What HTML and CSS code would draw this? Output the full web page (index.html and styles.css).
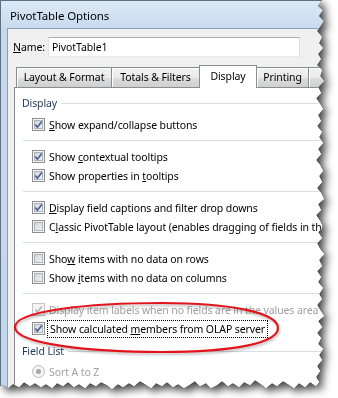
FILE: index.html
```html
<!DOCTYPE html>
<html lang="en">
<head>
    <meta charset="UTF-8">
    <title>PivotTable Options</title>
    <link rel="stylesheet" href="styles.css">
</head>
<body>
    <div class="sheet">
        <div class="shadow">
            <div class="window">
                <div class="titlebar">PivotTable Options</div>
                <div class="frame">
                    <div class="client">
                        <!-- Name -->
                        <div class="name-row">
                            <span class="name-label"><u>N</u>ame:</span>
                            <div class="textbox">PivotTable1</div>
                        </div>

                        <!-- Tabs -->
                        <div class="tabs">
                            <div class="tab tab-layout">Layout &amp; Format</div>
                            <div class="tab tab-totals">Totals &amp; Filters</div>
                            <div class="tab tab-display active">Display</div>
                            <div class="tab tab-printing">Printing</div>
                            <div class="tab tab-data">Data</div>
                        </div>

                        <div class="panel">
                            <div class="group-title"><span>Display</span></div>

                            <div class="row"><span class="check on"><svg viewBox="0 0 11 11"><path d="M2.3 5.4 L4.4 8.2 L8.8 2.4"/></svg></span><span><u>S</u>how expand/collapse buttons</span></div>
                            <div class="sep"></div>

                            <div class="row"><span class="check on"><svg viewBox="0 0 11 11"><path d="M2.3 5.4 L4.4 8.2 L8.8 2.4"/></svg></span><span>Show <u>c</u>ontextual tooltips</span></div>
                            <div class="row"><span class="check on"><svg viewBox="0 0 11 11"><path d="M2.3 5.4 L4.4 8.2 L8.8 2.4"/></svg></span><span>Show properties in <u>t</u>ooltips</span></div>
                            <div class="sep"></div>

                            <div class="row"><span class="check on"><svg viewBox="0 0 11 11"><path d="M2.3 5.4 L4.4 8.2 L8.8 2.4"/></svg></span><span><u>D</u>isplay field captions and filter drop downs</span></div>
                            <div class="row"><span class="check"></span><span>C<u>l</u>assic PivotTable layout (enables dragging of fields in the grid)</span></div>
                            <div class="sep"></div>

                            <div class="row"><span class="check"></span><span>Sho<u>w</u> items with no data on rows</span></div>
                            <div class="row"><span class="check"></span><span>Show <u>i</u>tems with no data on columns</span></div>
                            <div class="sep"></div>

                            <div class="row disabled"><span class="check on"><svg viewBox="0 0 11 11"><path d="M2.3 5.4 L4.4 8.2 L8.8 2.4"/></svg></span><span>Display item labels when no fields are in the values area</span></div>
                            <div class="row"><span class="check on"><svg viewBox="0 0 11 11"><path d="M2.3 5.4 L4.4 8.2 L8.8 2.4"/></svg></span><span class="focus">Show calculated <u>m</u>embers from OLAP server</span></div>

                            <div class="group-title field-list"><span>Field List</span></div>
                            <div class="row disabled"><span class="radio"><span class="dot"></span></span><span>Sort A to Z</span></div>
                        </div>
                    </div>
                </div>
            </div>
        </div>

        <!-- red marker ring -->
        <svg class="marker" width="338" height="398" viewBox="0 0 338 398">
            <path d="M15 327 C15 311 88 303 162 303 C232 303 278 313 278 328 C278 343 234 352 162 352 C90 352 15 344 15 327 Z"/>
        </svg>
    </div>
</body>
</html>
```

FILE: styles.css
```css
* {
    margin: 0;
    padding: 0;
    box-sizing: border-box;
}

body {
    background-color: #ffffff;
    font-family: "Noto Sans", "Open Sans", sans-serif;
    font-size: 10.5px;
    letter-spacing: -0.1px;
    color: #000000;
}

u {
    text-underline-offset: 1px;
}

.sheet {
    position: relative;
    width: 338px;
    height: 398px;
    overflow: hidden;
}

.shadow {
    filter: drop-shadow(0 0 0.6px rgba(0, 0, 0, 0.9)) drop-shadow(4px 4px 4px rgba(0, 0, 0, 0.75));
}

.window {
    width: 328px;
    height: 396px;
    display: flex;
    flex-direction: column;
    background: linear-gradient(#dce8f5, #c7d9ee 30px, #c2d6ec);
    border-top: 1px solid #5f6f84;
    border-left: 1px solid #5f6f84;
    clip-path: path('M0 0 H322 L318 6 L323 10 L319 16 L324 21 L320 27 L317 31 L322 37 L319 43 L323 48 L318 54 L321 59 L317 65 L322 70 L320 76 L324 81 L318 87 L321 93 L316 98 L320 104 L323 109 L318 115 L321 121 L317 126 L322 132 L319 137 L323 143 L318 149 L321 154 L316 160 L320 165 L323 171 L319 176 L322 182 L317 188 L321 193 L324 199 L318 204 L321 210 L316 215 L320 221 L323 227 L318 232 L322 238 L317 243 L320 249 L324 254 L319 260 L322 266 L317 271 L321 277 L318 282 L323 288 L319 294 L322 299 L317 305 L320 310 L324 316 L318 321 L322 327 L317 333 L321 338 L318 344 L323 349 L319 355 L322 360 L317 366 L320 371 L316 377 L319 382 L316 386 L310 382 L305 387 L299 383 L294 388 L288 384 L283 381 L277 386 L272 383 L266 388 L261 384 L255 380 L250 385 L244 382 L239 387 L233 383 L228 386 L222 381 L217 385 L211 388 L206 383 L200 386 L195 381 L189 385 L184 388 L178 384 L173 387 L167 382 L162 386 L156 383 L151 388 L145 384 L140 381 L134 386 L129 383 L123 387 L118 384 L112 389 L107 385 L101 382 L96 386 L90 383 L85 388 L79 384 L74 387 L68 382 L63 386 L57 383 L52 388 L46 384 L41 387 L35 383 L30 386 L24 382 L19 387 L13 384 L8 388 L2 385 L0 386 Z');
}

.titlebar {
    height: 27px;
    padding-left: 9px;
    line-height: 29px;
    font-size: 11.5px;
    color: #000000;
}

.frame {
    flex: 1;
    display: flex;
    padding-left: 6px;
}

.client {
    flex: 1;
    display: flex;
    flex-direction: column;
    background-color: #f0f0f0;
    border-top: 1px solid #8d9fb6;
    border-left: 1px solid #8d9fb6;
    padding-top: 8px;
}

.name-row {
    display: flex;
    align-items: center;
    padding-left: 5px;
}

.name-label {
    width: 35px;
}

.textbox {
    width: 252px;
    height: 20px;
    padding-left: 3px;
    line-height: 18px;
    background-color: #ffffff;
    border: 1px solid #abadb3;
    border-left-color: #e2e3ea;
    border-right-color: #dbdfe6;
    border-bottom-color: #e3e9ef;
}

.tabs {
    display: flex;
    align-items: flex-end;
    height: 23px;
    margin-top: 8px;
    margin-bottom: -1px;
    padding-left: 8px;
    position: relative;
    z-index: 1;
}

.tab {
    flex: none;
    height: 20px;
    margin: 0 -1px 1px 0;
    line-height: 19px;
    text-align: center;
    white-space: nowrap;
    border: 1px solid #898c95;
    border-bottom: none;
    background: linear-gradient(#f2f2f2, #ebebeb 50%, #dddddd 51%, #cfcfcf);
    box-shadow: inset 1px 1px 0 #ffffff;
}

.tab-layout { width: 96px; }
.tab-totals { width: 89px; }
.tab-display { width: 58px; }
.tab-printing { width: 53px; }
.tab-data { width: 56px; }

.tab.active {
    height: 23px;
    margin-bottom: 0;
    line-height: 20px;
    background: #ffffff;
    box-shadow: none;
    position: relative;
    z-index: 2;
}

.panel {
    flex: 1;
    margin-left: 6px;
    background-color: #ffffff;
    border: 1px solid #898c95;
    padding-top: 6px;
}

.group-title {
    display: flex;
    align-items: center;
    height: 18px;
    padding-left: 7px;
    color: #1e395b;
    margin-bottom: 3px;
}

.group-title::after {
    content: "";
    flex: 1;
    height: 1px;
    margin-left: 4px;
    background-color: #d5dfe5;
}

.field-list {
    margin-top: 4px;
    margin-bottom: 2px;
}

.row {
    display: flex;
    align-items: center;
    height: 19px;
    padding-left: 17px;
    gap: 4px;
    white-space: nowrap;
}

.sep {
    height: 1px;
    margin: 6px 0 6px 8px;
    background-color: #d5dfe5;
}

.check {
    flex: none;
    width: 13px;
    height: 13px;
    border: 1px solid #8e8f8f;
    background: linear-gradient(135deg, #cbcfd5, #f7f7f7);
    box-shadow: inset 0 0 0 1px #f4f4f4, inset 0 0 0 2px #aeb3b9;
}

.check svg {
    display: block;
    width: 11px;
    height: 11px;
    fill: none;
    stroke: #4a5f97;
    stroke-width: 1.7;
}

.disabled {
    color: #a0a0a0;
}

.disabled .check {
    border-color: #c4c4c4;
    background: #f4f4f4;
    box-shadow: inset 0 0 0 2px #f4f4f4;
}

.disabled .check svg {
    stroke: #b5b5b5;
}

.radio {
    flex: none;
    width: 13px;
    height: 13px;
    border: 1px solid #bcbcbc;
    border-radius: 50%;
    background: #f4f4f4;
    display: flex;
    align-items: center;
    justify-content: center;
}

.radio .dot {
    width: 5px;
    height: 5px;
    border-radius: 50%;
    background-color: #a8a8a8;
}

.focus {
    outline: 1px dotted #000000;
    outline-offset: 1px;
    padding: 0 1px;
}

.marker {
    position: absolute;
    left: 0;
    top: 0;
    pointer-events: none;
    filter: drop-shadow(1px 2px 1px rgba(0, 0, 0, 0.25));
}

.marker path {
    fill: none;
    stroke: #e2141c;
    stroke-width: 2.2;
}
```
